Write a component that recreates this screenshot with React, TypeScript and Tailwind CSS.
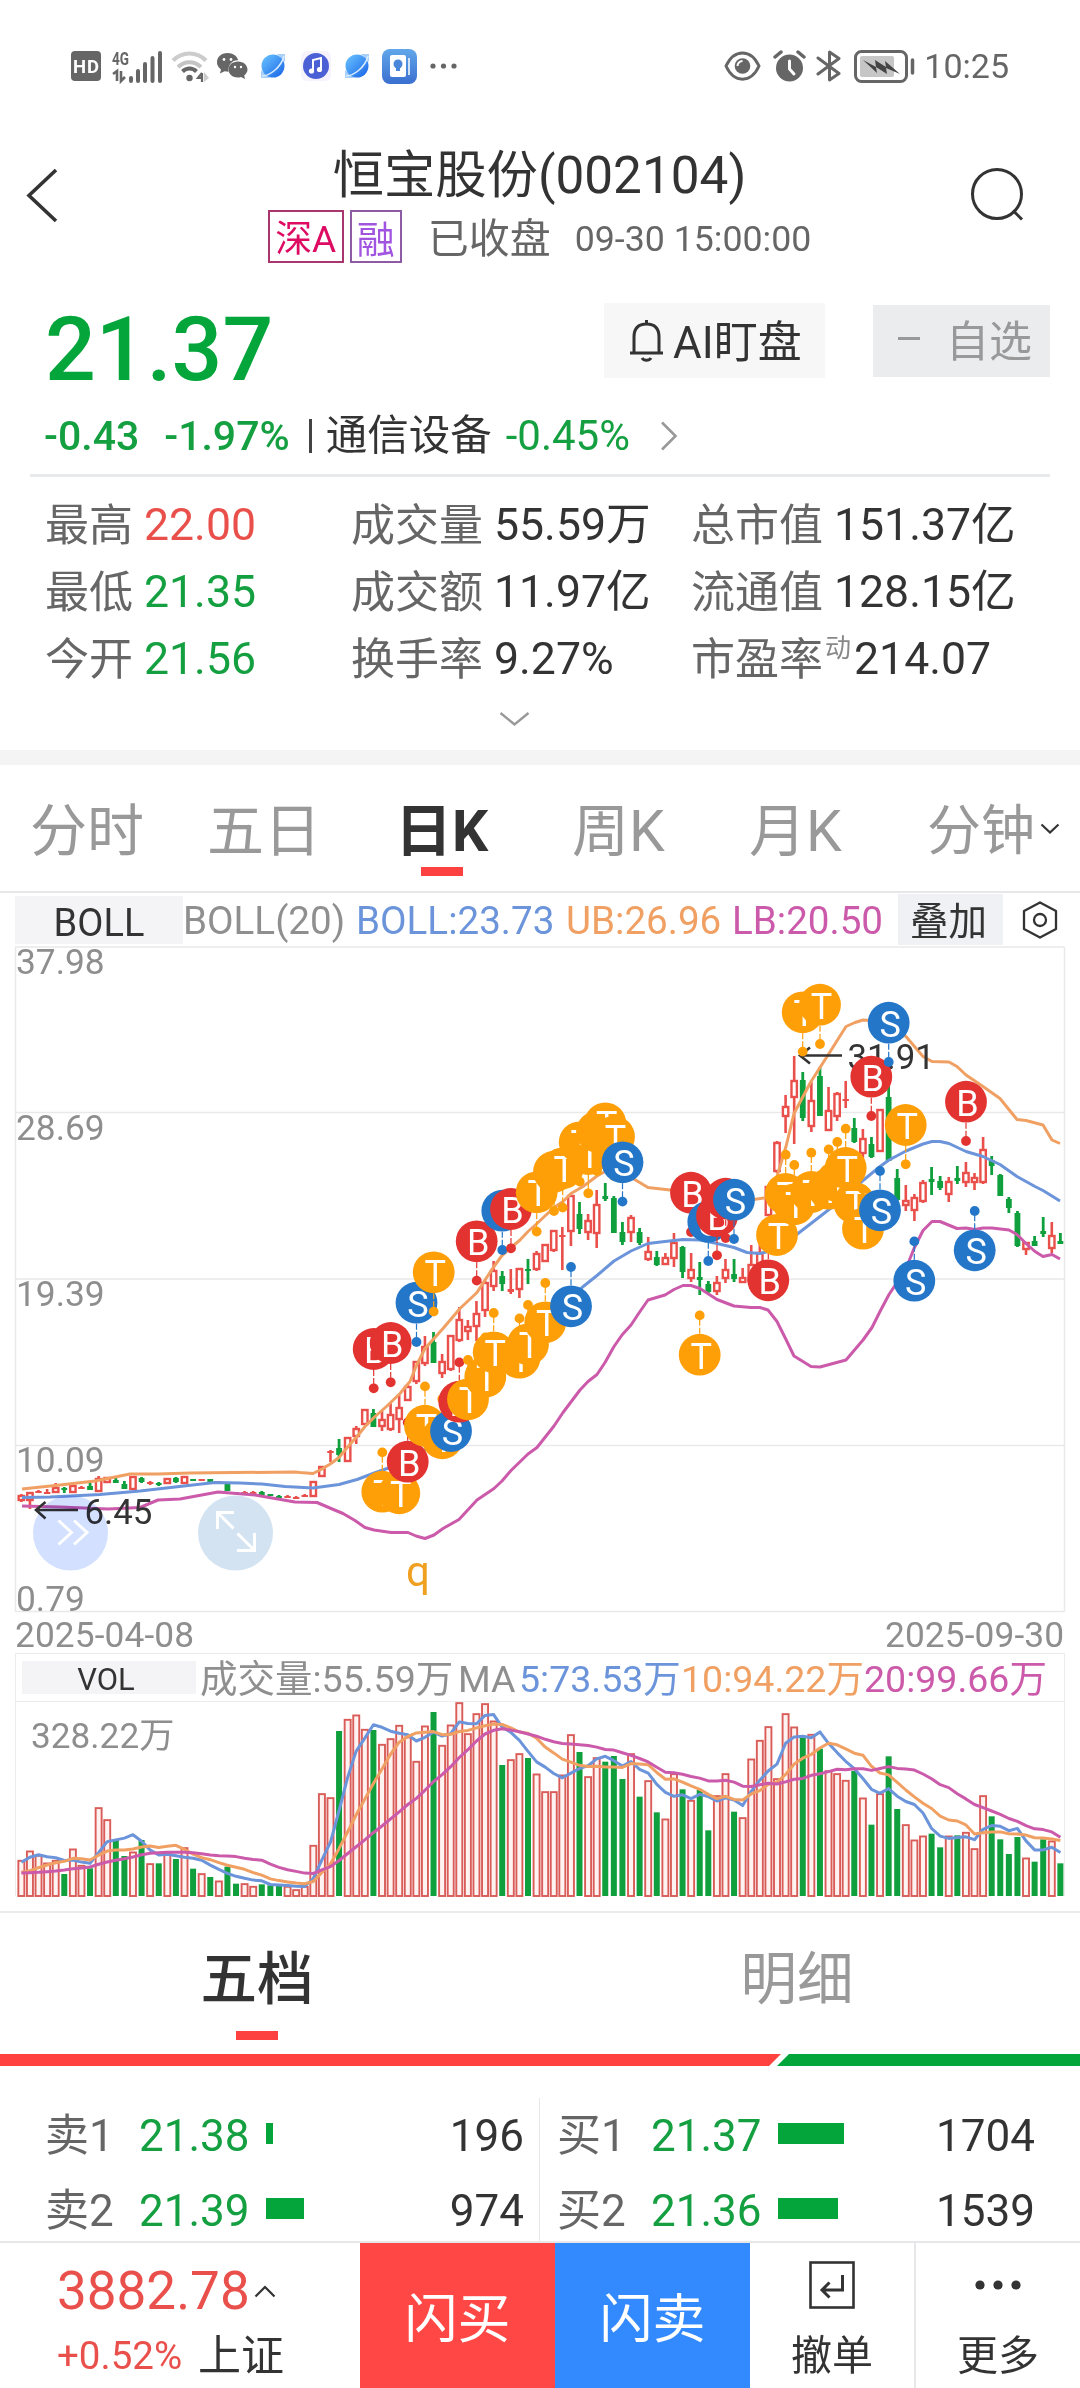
import React from 'react';

// bar geometry shared by both charts
const FIRST_X = 21.35;
const STEP = 8.587;
const barX = (index: number) => FIRST_X + index * STEP;

const RED = '#ea504b';
const GREEN = '#0f9f3c';

// [direction, high, body top, body bottom, low] in chart pixels
type Candle = ['r' | 'g', number, number, number, number];

const candles: Candle[] = [
  ['r', 1494, 1496, 1500, 1502], ['r', 1492, 1493, 1500, 1509], ['r', 1490, 1491, 1493, 1493], ['r', 1489, 1492, 1494, 1494],
  ['r', 1483, 1488, 1492, 1493], ['g', 1487, 1488, 1490, 1493], ['r', 1485, 1486, 1492, 1493], ['r', 1486, 1487, 1489, 1489],
  ['g', 1483, 1486, 1490, 1490], ['r', 1476, 1479, 1491, 1492], ['r', 1477, 1478, 1482, 1483], ['g', 1476, 1480, 1483, 1483],
  ['g', 1481, 1484, 1489, 1489], ['r', 1476, 1477, 1489, 1489], ['g', 1477, 1478, 1482, 1483], ['r', 1481, 1482, 1484, 1485],
  ['g', 1482, 1483, 1485, 1486], ['r', 1478, 1479, 1483, 1483], ['g', 1477, 1478, 1482, 1483], ['r', 1476, 1477, 1483, 1483],
  ['g', 1479, 1479, 1481, 1481], ['r', 1479, 1479, 1481, 1481], ['g', 1479, 1479, 1482, 1482], ['r', 1481, 1481, 1483, 1483],
  ['g', 1484, 1484, 1491, 1491], ['g', 1492, 1492, 1494, 1494], ['r', 1491, 1492, 1493, 1493], ['r', 1491, 1492, 1493, 1493],
  ['g', 1491, 1492, 1495, 1495], ['g', 1494, 1494, 1496, 1496], ['g', 1495, 1496, 1498, 1498], ['r', 1495, 1496, 1497, 1498],
  ['r', 1496, 1497, 1498, 1498], ['r', 1494, 1495, 1497, 1497], ['r', 1481, 1482, 1496, 1497], ['r', 1466, 1467, 1476, 1477],
  ['r', 1450, 1451, 1452, 1462], ['g', 1439, 1448, 1455, 1462], ['r', 1437, 1438, 1461, 1462], ['r', 1426, 1429, 1436, 1444],
  ['r', 1409, 1410, 1424, 1425], ['g', 1409, 1413, 1427, 1427], ['r', 1411, 1420, 1426, 1431], ['r', 1403, 1415, 1429, 1431],
  ['r', 1395, 1408, 1419, 1433], ['r', 1385, 1387, 1400, 1401], ['r', 1361, 1362, 1381, 1384], ['r', 1336, 1347, 1363, 1366],
  ['g', 1332, 1342, 1363, 1363], ['r', 1354, 1362, 1373, 1378], ['r', 1335, 1336, 1369, 1371], ['r', 1307, 1320, 1340, 1342],
  ['r', 1320, 1327, 1331, 1340], ['r', 1301, 1314, 1326, 1341], ['r', 1280, 1283, 1310, 1317], ['r', 1261, 1271, 1286, 1291],
  ['g', 1271, 1276, 1284, 1291], ['r', 1269, 1289, 1292, 1294], ['r', 1268, 1269, 1289, 1298], ['g', 1259, 1269, 1271, 1284],
  ['r', 1251, 1254, 1269, 1271], ['r', 1244, 1245, 1261, 1262], ['r', 1230, 1231, 1250, 1252], ['r', 1227, 1235, 1237, 1270],
  ['r', 1195, 1196, 1231, 1246], ['g', 1202, 1214, 1229, 1234], ['r', 1214, 1221, 1232, 1240], ['r', 1190, 1205, 1233, 1248],
  ['g', 1183, 1196, 1199, 1201], ['g', 1196, 1198, 1233, 1233], ['g', 1222, 1232, 1242, 1245], ['r', 1215, 1218, 1232, 1242],
  ['g', 1228, 1232, 1243, 1245], ['r', 1237, 1252, 1259, 1261], ['g', 1251, 1257, 1265, 1266], ['r', 1253, 1258, 1264, 1265],
  ['r', 1233, 1243, 1258, 1267], ['g', 1246, 1247, 1272, 1278], ['r', 1253, 1270, 1278, 1282], ['g', 1262, 1277, 1280, 1295],
  ['g', 1281, 1284, 1292, 1293], ['r', 1276, 1283, 1291, 1295], ['r', 1259, 1270, 1278, 1283], ['g', 1259, 1274, 1279, 1282],
  ['r', 1268, 1278, 1282, 1283], ['r', 1245, 1265, 1281, 1283], ['r', 1225, 1253, 1265, 1275], ['r', 1185, 1187, 1215, 1216],
  ['r', 1141, 1143, 1171, 1173], ['r', 1095, 1107, 1116, 1133], ['r', 1056, 1081, 1097, 1144], ['g', 1072, 1080, 1118, 1121],
  ['r', 1082, 1101, 1126, 1132], ['g', 1067, 1076, 1116, 1116], ['r', 1087, 1111, 1130, 1131], ['r', 1092, 1094, 1116, 1121],
  ['r', 1081, 1099, 1101, 1108], ['g', 1118, 1128, 1142, 1143], ['r', 1129, 1139, 1153, 1160], ['g', 1137, 1144, 1157, 1158],
  ['r', 1109, 1110, 1151, 1152], ['g', 1083, 1097, 1161, 1161], ['g', 1169, 1178, 1200, 1201], ['r', 1185, 1201, 1205, 1211],
  ['r', 1194, 1198, 1210, 1221], ['r', 1180, 1183, 1201, 1203], ['g', 1167, 1179, 1182, 1195], ['g', 1176, 1181, 1188, 1190],
  ['r', 1177, 1182, 1194, 1202], ['g', 1166, 1178, 1181, 1184], ['r', 1162, 1173, 1182, 1187], ['r', 1173, 1178, 1182, 1190],
  ['r', 1137, 1150, 1182, 1184], ['g', 1156, 1160, 1166, 1175], ['g', 1174, 1175, 1196, 1196], ['g', 1197, 1199, 1208, 1213],
  ['g', 1211, 1213, 1246, 1247], ['r', 1242, 1243, 1249, 1255], ['g', 1236, 1241, 1246, 1246], ['g', 1217, 1231, 1234, 1237],
  ['r', 1222, 1236, 1248, 1253], ['g', 1233, 1241, 1244, 1244],
];

// volume bar tops, measured down from the header in thirds of a pixel
const VOLUME_BASE = 768;
const volumeTops = [
  660, 632, 645, 668, 660, 702, 626, 675, 685, 502, 538, 598, 648, 635, 600, 670, 670, 640, 657, 622,
  686, 700, 711, 722, 680, 731, 730, 738, 733, 736, 738, 738, 748, 738, 615, 460, 472, 273, 237, 224,
  267, 270, 312, 295, 255, 290, 363, 257, 216, 315, 254, 187, 280, 220, 190, 242, 375, 358, 340, 354,
  401, 454, 454, 404, 283, 336, 409, 352, 365, 348, 417, 340, 470, 421, 517, 536, 400, 448, 480, 450,
  571, 466, 400, 515, 532, 356, 300, 259, 415, 220, 260, 290, 282, 326, 391, 400, 420, 393, 473, 554,
  460, 349, 507, 553, 599, 587, 581, 622, 587, 586, 576, 625, 466, 529, 598, 642, 591, 653, 665, 598,
  602, 670,
];

const volumeY = (v: number) => 1640 + v / 3;

// averages before the first full window come from the previous sessions
const seed5 = [667, 652, 644, 650];
const seed10 = [697, 692, 683, 675, 668, 664, 655, 656, 660];
const seed20 = [699, 698, 697, 695, 693, 690, 686, 684, 681, 673, 666, 661, 656, 651, 644, 640, 638, 637, 637];

const averageLine = (period: number, seed: number[]) =>
  volumeTops
    .map((_, i) => {
      const value =
        i < period - 1
          ? seed[i]
          : volumeTops.slice(i - period + 1, i + 1).reduce((a, b) => a + b, 0) / period;
      return `${barX(i).toFixed(1)},${volumeY(value).toFixed(1)}`;
    })
    .join(' ');

const upperBand =
  '22,1489 60,1485 95,1481 130,1474 158,1474 190,1473 295,1472 300,1472.5 313,1473.5 322,1469 331,1463.5 339,1457.5 348,1446.5 357,1436.5 365,1426.5 374,1417.5 387,1406 400,1393.5 410,1381.5 416,1366.5 425,1348.5 434,1338.5 443,1328.5 460,1308.5 477,1292.5 485,1280 494,1266.5 502,1255.5 520,1240 528,1231.5 537,1223.5 554,1207.5 563,1201.5 571,1193.5 583,1186.5 597,1176 605,1171.5 622,1167 633,1178.5 648,1187.5 670,1190 700,1193.5 727,1198.5 750,1200 768,1197.5 777,1176.5 786,1146.5 794,1113.5 811,1081.5 829,1053.5 846,1026.5 855,1022.5 863,1020 870,1020.5 889,1025 906,1036.5 923,1056.5 932,1061.5 949,1062 957,1066.5 966,1075 983,1086.5 1000,1098.5 1017,1119.5 1026,1120.5 1043,1125 1052,1140 1060,1143.5';

const middleBand =
  '22,1497.5 50,1497 100,1494.5 140,1491 175,1487 215,1482.5 240,1483 262,1484 285,1486.5 313,1488 339,1484.5 357,1479.5 373,1473.5 387,1468.5 408,1460 433,1445 460,1421.5 487,1391.5 513,1356.5 547,1320 582,1287.5 597,1275.5 614,1261 631,1251 648,1243.5 665,1241.5 683,1239.5 700,1240 717,1243.5 734,1247.5 747,1252.5 760,1253.5 777,1249.5 798,1233.5 811,1223.5 829,1209.5 846,1197.5 863,1180.5 880,1166.5 889,1160 906,1151 923,1144 932,1141.5 940,1141.5 949,1143.5 966,1151.5 983,1156.5 1000,1164.5 1017,1176.5 1035,1186.5 1043,1190.5 1060,1201';

const lowerBand =
  '22,1506 60,1507 108,1509 140,1507.5 158,1500 180,1499 218,1492 255,1495 295,1502 317,1502.5 331,1508.5 343,1513.5 355,1520.5 365,1527.5 374,1530 391,1532.5 408,1532.5 416,1536 425,1538.5 434,1535 443,1528.5 459,1519.5 477,1500 494,1488.5 502,1481 511,1470.5 528,1454 537,1447.5 554,1426 563,1412.5 580,1390 588,1381.5 597,1374.5 605,1362.5 614,1346.5 622,1335 631,1325 640,1311.5 648,1300 665,1295 674,1289.5 683,1285.5 691,1285.5 700,1288.5 717,1299.5 734,1306 751,1307.5 760,1307.5 768,1310 777,1321.5 786,1339.5 794,1356 811,1366.5 820,1367 846,1360 863,1340 872,1327.5 880,1311.5 889,1294.5 897,1282.5 906,1268.5 914,1248.5 923,1230.5 932,1221.5 940,1221.5 957,1228.5 966,1228 975,1229.5 983,1228 992,1228 1009,1230 1017,1234.5 1026,1243.5 1035,1251.5 1043,1256.5 1052,1254.5 1060,1259';

const markerColors = { B: '#e23330', S: '#2476c8', T: '#ff9f08' };

// [kind, x, circle y, side the dot is on]
type Marker = ['B' | 'S' | 'T', number, number, 1 | -1];

const markers: Marker[] = [
  ['B', 373.7, 1349, 1], ['T', 382.3, 1491.7, -1], ['B', 390.7, 1343, 1], ['T', 399.3, 1493.3, -1],
  ['B', 407.7, 1461.7, -1], ['S', 416.5, 1302.7, 1], ['T', 425, 1425.7, -1], ['T', 433.7, 1272.3, 1],
  ['T', 442.3, 1438.3, -1], ['S', 451, 1431, -1], ['B', 459.3, 1401.7, -1], ['T', 468, 1399.3, -1],
  ['B', 476.7, 1241.3, 1], ['T', 485.3, 1376.7, -1], ['T', 493.7, 1352.3, -1], ['S', 502.3, 1210.7, 1],
  ['B', 511, 1209, 1], ['T', 519.5, 1357.7, -1], ['T', 528, 1344.3, -1], ['T', 536.7, 1192.3, 1],
  ['T', 545.3, 1322.3, -1], ['T', 554, 1171.7, 1], ['T', 562.7, 1168.3, 1], ['S', 571, 1306.3, -1],
  ['T', 579.7, 1142.3, 1], ['T', 588.3, 1154, 1], ['T', 597, 1131.7, 1], ['T', 605.3, 1123.3, 1],
  ['T', 614, 1136.7, 1], ['S', 622.5, 1162.3, 1], ['B', 691, 1192.7, 1], ['T', 699.7, 1354.7, -1],
  ['S', 708.3, 1221.7, 1], ['B', 717, 1216, 1], ['B', 725.7, 1198.7, 1], ['S', 734, 1199.7, 1],
  ['B', 768.3, 1280.3, -1], ['T', 777, 1235, -1], ['T', 785.7, 1194, -1], ['T', 794.3, 1204.3, -1],
  ['T', 802.7, 1012.3, 1], ['T', 811.3, 1192, -1], ['T', 820, 1004.7, 1], ['T', 828.7, 1188.7, -1],
  ['T', 837.3, 1181.3, -1], ['T', 845.7, 1168, -1], ['T', 854.3, 1203, -1], ['T', 863, 1228.7, -1],
  ['B', 871.3, 1076.7, 1], ['S', 880, 1210.3, -1], ['S', 888.7, 1022.7, 1], ['T', 905.7, 1125, 1],
  ['S', 914.3, 1280.7, -1], ['B', 966, 1101.7, 1], ['S', 974.7, 1250.3, -1],
];

const axisLabels = [
  { text: '37.98', y: 974 },
  { text: '28.69', y: 1140 },
  { text: '19.39', y: 1306 },
  { text: '10.09', y: 1472 },
  { text: '0.79', y: 1610.5 },
];

const stats = [
  [
    { label: '最高', value: '22.00', color: 'text-[#ea504b]' },
    { label: '成交量', value: '55.59万', color: 'text-[#333]' },
    { label: '总市值', value: '151.37亿', color: 'text-[#333]' },
  ],
  [
    { label: '最低', value: '21.35', color: 'text-[#149f40]' },
    { label: '成交额', value: '11.97亿', color: 'text-[#333]' },
    { label: '流通值', value: '128.15亿', color: 'text-[#333]' },
  ],
  [
    { label: '今开', value: '21.56', color: 'text-[#149f40]' },
    { label: '换手率', value: '9.27%', color: 'text-[#333]' },
    { label: '市盈率', sup: '动', value: '214.07', color: 'text-[#333]' },
  ],
];

const orders = [
  { side: '卖1', price: '21.38', bar: 7, amount: '196' },
  { side: '买1', price: '21.37', bar: 66, amount: '1704' },
  { side: '卖2', price: '21.39', bar: 38, amount: '974' },
  { side: '买2', price: '21.36', bar: 60, amount: '1539' },
];

const BrowserIcon = () => (
  <svg width="26" height="26" viewBox="0 0 26 26">
    <defs>
      <linearGradient id="globe" x1="0" y1="0" x2="1" y2="1">
        <stop offset="0" stopColor="#6cc6ff" />
        <stop offset="1" stopColor="#1763e8" />
      </linearGradient>
    </defs>
    <path d="M17 1h8v8z M1 17v8h9z" fill="#a9d0fb" />
    <circle cx="13" cy="13" r="11.5" fill="url(#globe)" />
    <path d="M2 23C9 23 21 15 24 3" fill="none" stroke="#d8ecff" strokeWidth="1.6" />
  </svg>
);

const StatusBar = () => (
  <div className="flex h-[132px] items-center justify-between pl-[71px] pr-[71px] text-[#666]">
    <div className="flex items-center">
      <svg width="30" height="30" viewBox="0 0 30 30">
        <rect width="30" height="30" rx="4" fill="#666" />
        <text x="2" y="22" fontSize="18.5" fontWeight="700" fill="#fff" textLength="26" fontFamily="Roboto, sans-serif">HD</text>
      </svg>
      <svg className="ml-2.5 overflow-visible" width="52" height="34" viewBox="0 0 52 34">
        <text x="1" y="15.500" fontSize="19" fontWeight="700" fill="#666" textLength="17" lengthAdjust="spacingAndGlyphs" fontFamily="Roboto, sans-serif">4G</text>
        <path d="M2 25l4-3v10M10 22v10l4-4" fill="none" stroke="#666" strokeWidth="2.6" />
        <path d="M20 29v3M27 22v10M34 15v17M41.500 9v23M49 4v28" stroke="#666" strokeWidth="4" strokeLinecap="round" />
      </svg>
      <svg className="ml-2" width="38" height="34" viewBox="0 0 38 34">
        <g fill="none" strokeWidth="4">
          <path d="M2 11.500C11 2 26 2 35 11.500" stroke="#ccc" />
          <path d="M7 18C14 11.500 23 11.500 30 18" stroke="#c4c4c4" />
          <path d="M11.500 22.500c4-4 10-4 14 0" stroke="#666" />
        </g>
        <circle cx="18.500" cy="29" r="3.200" fill="#666" />
        <path d="M31 24v9M31 24l-4 5h4" fill="none" stroke="#666" strokeWidth="2.200" />
        <path d="M33 23l5 6-5 4z" fill="#ccc" />
      </svg>
      <svg className="ml-[7px]" width="32" height="28" viewBox="0 0 32 28">
        <path d="M11.500 1C5.200 1 1 5 1 10.200c0 3 1.600 5.500 4 7.200l-1 4 4.500-2.200 4 .5c-1-7 4-12 9.700-11.500C21 4 17 1 11.500 1z" fill="#666" />
        <path d="M22 9.500c-5.500 0-9.500 3.600-9.500 8 0 4.600 4 8 9.500 8 1 0 2-.1 3-.5l4 2-.8-3.500c1.900-1.500 3.300-3.600 3.300-6 0-4.400-4.200-8-9.500-8z" fill="#666" />
        <g fill="#fff">
          <circle cx="8" cy="7.500" r="1.400" />
          <circle cx="15" cy="7.500" r="1.400" />
          <circle cx="19" cy="15" r="1.200" />
          <circle cx="25" cy="15" r="1.200" />
        </g>
      </svg>
      <span className="ml-[12px]"><BrowserIcon /></span>
      <svg className="ml-[15px]" width="30" height="30" viewBox="0 0 30 30">
        <rect width="30" height="30" rx="6" fill="#f6f3fc" />
        <circle cx="15" cy="15" r="13" fill="#4c60d6" />
        <path d="M12 20V9l8-2v11.500" fill="none" stroke="#fff" strokeWidth="2" />
        <circle cx="10.500" cy="20" r="2.600" fill="#fff" />
        <circle cx="18.500" cy="18.500" r="2.600" fill="#fff" />
      </svg>
      <span className="ml-[13px]"><BrowserIcon /></span>
      <svg className="ml-3" width="35" height="35" viewBox="0 0 35 35">
        <defs>
          <linearGradient id="tips" x1="0" y1="0" x2="0" y2="1">
            <stop offset="0" stopColor="#61a7ea" />
            <stop offset="1" stopColor="#3a6fd0" />
          </linearGradient>
        </defs>
        <rect width="35" height="35" rx="8" fill="url(#tips)" />
        <rect x="8" y="6" width="16" height="22" rx="2" fill="#fff" />
        <path d="M27 9v17" stroke="#cfe2fa" strokeWidth="2" />
        <circle cx="16" cy="15" r="4.500" fill="#4a86da" />
        <path d="M14 19h4v3h-4z" fill="#4a86da" />
      </svg>
      <svg className="ml-[13px]" width="27" height="6" viewBox="0 0 27 6" fill="#666">
        <circle cx="3" cy="3" r="2.600" />
        <circle cx="13.500" cy="3" r="2.600" />
        <circle cx="24" cy="3" r="2.600" />
      </svg>
    </div>
    <div className="flex items-center">
      <svg width="37" height="30" viewBox="0 0 37 30">
        <path d="M2 15C10-2.500 27-2.500 35 15 27 32.500 10 32.500 2 15z" fill="none" stroke="#666" strokeWidth="3" />
        <circle cx="18.500" cy="15" r="7.800" fill="#666" />
        <path d="M13.500 15a5 5 0 0 1 5-5" fill="none" stroke="#fff" strokeWidth="2" />
      </svg>
      <svg className="ml-3" width="33" height="32" viewBox="0 0 33 32">
        <circle cx="16.500" cy="18" r="13.500" fill="#666" />
        <path d="M2 7l6-5M31 7l-6-5" stroke="#666" strokeWidth="3.500" strokeLinecap="round" />
        <path d="M16.500 11v8l4.500 5" fill="none" stroke="#fff" strokeWidth="3" strokeLinecap="round" />
      </svg>
      <svg className="ml-[10px]" width="26" height="34" viewBox="0 0 26 34">
        <path d="M2 9l21 15.500L13.500 31V3L23 9.500 2 25" fill="none" stroke="#666" strokeWidth="3" strokeLinejoin="round" strokeLinecap="round" />
      </svg>
      <svg className="ml-3" width="62" height="33" viewBox="0 0 62 33">
        <rect x="1.500" y="1.500" width="51" height="30" rx="6" fill="none" stroke="#666" strokeWidth="3" />
        <rect x="6" y="6" width="34" height="21" rx="2" fill="#c6c6c6" />
        <path d="M9 10l13 7-1-7 11 7-1-6 15 13-14-6 1 6-11-7 1 6z" fill="#444" />
        <path d="M58.500 10v13" stroke="#666" strokeWidth="3.500" strokeLinecap="round" />
      </svg>
      <span className="ml-2 text-[34px] leading-none">10:25</span>
    </div>
  </div>
);

const Header = () => (
  <header className="flex h-[147px] justify-between pl-[25px] pr-[54px]">
    <svg className="mt-9" width="34" height="56" viewBox="0 0 34 56">
      <path d="M31 2L4 27.500 31 53" fill="none" stroke="#333" strokeWidth="3.600" />
    </svg>
    <div className="ml-[50px] flex flex-col items-center pt-[17px]">
      <h1 className="whitespace-nowrap text-[51.3px] leading-[54px] text-[#333]">恒宝股份(002104)</h1>
      <div className="mt-[7px] flex items-center whitespace-nowrap leading-none text-[#666]">
        <span className="flex h-[53px] w-[76px] items-center justify-center border-2 border-[#a9366f] pt-1.5 text-[37px] text-[#dd0b62]">深A</span>
        <span className="ml-1.5 flex h-[53px] w-[52px] items-center justify-center border-2 border-[#8d5aa3] pt-1.5 text-[38px] text-[#a154e0]">融</span>
        <span className="ml-[26px] pt-1.5 text-[41px]">已收盘</span>
        <span className="ml-6 pt-1.5 text-[35.7px]">09-30 15:00:00</span>
      </div>
    </div>
    <svg className="mt-[34px]" width="56" height="56" viewBox="0 0 56 56">
      <circle cx="27" cy="28" r="24.500" fill="none" stroke="#333" strokeWidth="3" />
      <path d="M43 44.500l9 9" stroke="#333" strokeWidth="3" />
    </svg>
  </header>
);

const Quote = () => (
  <section className="h-[471px]">
    <div className="flex h-[124px] items-start justify-between pl-[45px] pr-[30px] pt-6">
      <span className="text-[89.5px] font-medium leading-[94px] text-[#04a53b]">21.37</span>
      <div className="flex items-center">
        <button className="flex h-[75px] w-[221px] items-center bg-[#f7f7f7] pl-[25px] text-[44px] leading-none text-[#333]">
          <svg width="35" height="42" viewBox="0 0 35 42">
            <path d="M1 33h33M5 33V17C5 8 10 4 17.500 4S30 8 30 17v16M17.500 4V0M13 38c2 3 7 3 9 0" fill="none" stroke="#333" strokeWidth="3" />
          </svg>
          <span className="ml-[9px] whitespace-nowrap pt-1">AI盯盘</span>
        </button>
        <button className="ml-12 flex h-[72px] w-[177px] items-center bg-[#ebecee] pl-[25px] text-[43px] leading-none text-[#999]">
          <span className="mb-1 h-[3px] w-[22px] bg-[#999]" />
          <span className="ml-[26px] pt-1">自选</span>
        </button>
      </div>
    </div>
    <div className="mt-[10px] flex h-[46px] items-center whitespace-nowrap pl-[44px] text-[41px] leading-none text-[#149f40]">
      <span className="font-medium">-0.43</span>
      <span className="ml-[25px] font-medium">-1.97%</span>
      <span className="ml-[19px] h-[34px] w-[3px] bg-[#444]" />
      <span className="ml-[14px] text-[41.5px] text-[#333]">通信设备</span>
      <span className="ml-[14px] text-[42px]">-0.45%</span>
      <svg className="ml-[30px]" width="18" height="30" viewBox="0 0 18 30">
        <path d="M2 1.500L15.500 15 2 28.500" fill="none" stroke="#999" strokeWidth="2.600" />
      </svg>
    </div>
    <div className="mx-[30px] mt-[15px] h-[3px] bg-[#e8e9eb]" />
    <div className="mt-[15px]">
      {stats.map((row) => (
        <div key={row[0].label} className="grid h-[67px] grid-cols-[306px_340px_1fr] items-center whitespace-nowrap pl-[45px] text-[44px] leading-none">
          {row.map((item) => (
            <div key={item.label} className="flex items-center">
              <span className="text-[#666]">{item.label}</span>
              {item.sup && <span className="-mr-[8px] mb-6 ml-[2px] text-[26px] text-[#888]">{item.sup}</span>}
              <span className={`ml-[11px] text-[44.6px] ${item.color}`}>{item.value}</span>
            </div>
          ))}
        </div>
      ))}
    </div>
    <svg className="ml-[499px] mt-[18px]" width="31" height="16" viewBox="0 0 31 16">
      <path d="M1.500 2l14 11.500L29.500 2" fill="none" stroke="#999" strokeWidth="2.400" />
    </svg>
  </section>
);

const Periods = () => (
  <nav className="flex h-[128px] items-start whitespace-nowrap border-b-2 border-[#e7e7e9] pl-[30px] pt-[39px] text-[57px] leading-[56px] text-[#999]">
    <span className="w-[177px]">分时</span>
    <span className="w-[188px]">五日</span>
    <span className="flex w-[177px] flex-col font-bold text-[#333]">
      日K
      <span className="ml-[26px] mt-[7px] h-[9px] w-[42px] bg-[#fd4141]" />
    </span>
    <span className="w-[177px]">周K</span>
    <span className="w-[178px]">月K</span>
    <span className="text-[54px]">分钟</span>
    <svg className="ml-[5px] mt-[19px]" width="20" height="12" viewBox="0 0 20 12">
      <path d="M1.500 1.500L10 9.500l8.500-8" fill="none" stroke="#333" strokeWidth="2.200" />
    </svg>
  </nav>
);

const IndicatorBar = () => (
  <div className="flex h-[53px] items-center whitespace-nowrap pl-[15px] text-[38.6px] leading-none">
    <span className="flex h-12 w-[168px] items-center justify-center bg-[#f4f4f6] pt-1.5 text-[38px] text-[#333]">BOLL</span>
    <span className="w-[173px] pt-[3px] text-[#8f8f8f]">BOLL(20)</span>
    <span className="w-[210px] pt-[3px] text-[#6b94da]">BOLL:23.73</span>
    <span className="w-[166px] pt-[3px] text-[#f0a063]">UB:26.96</span>
    <span className="w-[166px] pt-[3px] text-[#cc5aaa]">LB:20.50</span>
    <span className="flex h-[51px] w-[105px] items-center justify-center bg-[#f0f1f4] pr-1 pt-1.5 text-[#333]">叠加</span>
    <svg className="ml-[19px]" width="36" height="38" viewBox="0 0 36 38">
      <path d="M18 1.500L34 10v18L18 36.500 2 28V10z" fill="none" stroke="#333" strokeWidth="2.300" strokeLinejoin="round" />
      <circle cx="18" cy="19" r="6" fill="none" stroke="#333" strokeWidth="2.300" />
    </svg>
  </div>
);

const CandleShape = ({ index, candle }: { index: number; candle: Candle }) => {
  const [direction, high, top, bottom, low] = candle;
  const x = barX(index);
  const body = bottom - top;
  if (direction === 'g') {
    return (
      <g fill={GREEN}>
        <rect x={x - 1.4} y={high} width={2.8} height={low - high} />
        <rect x={x - 2.9} y={top} width={5.8} height={body} />
      </g>
    );
  }
  return (
    <g fill={RED}>
      <rect x={x - 1.3} y={high} width={2.6} height={low - high} />
      {body > 3 ? (
        <rect x={x - 2.7} y={top} width={5.4} height={body} fill="#fff" stroke={RED} strokeWidth={2.4} />
      ) : (
        <rect x={x - 3.2} y={top} width={6.4} height={Math.max(body, 2)} />
      )}
    </g>
  );
};

const MarkerShape = ({ marker }: { marker: Marker }) => {
  const [kind, x, y, side] = marker;
  const color = markerColors[kind];
  return (
    <g>
      <line x1={x} y1={y + side * 21} x2={x} y2={y + side * 39} stroke={color} strokeWidth={1.2} strokeDasharray="6 2" />
      <circle cx={x} cy={y + side * 39.3} r={4.9} fill={color} />
      <circle cx={x} cy={y} r={20.9} fill={color} />
      <text x={x + 1.5} y={y + 14} textAnchor="middle" fontSize={36} fill="#fff">{kind}</text>
    </g>
  );
};

const KLineChart = () => (
  <svg className="block" width="1080" height="707" viewBox="0 946 1080 707" fontFamily="Roboto, sans-serif">
    <g stroke="#e9e9ea" strokeWidth="1.5" fill="none">
      <path d="M15 947H1064.500M15 1112.500H1064M15 1279H1064M15 1445.500H1064M15 1611.500H1064.500M15.500 947V1611.500M1064.500 947V1611.500" />
    </g>
    <g fontSize="35.3" fill="#8e8e8e">
      {axisLabels.map((label) => (
        <text key={label.text} x="16" y={label.y}>{label.text}</text>
      ))}
      <text x="15" y="1647" textLength="179">2025-04-08</text>
      <text x="885" y="1647" textLength="179">2025-09-30</text>
    </g>
    {candles.map((candle, index) => (
      <CandleShape key={index} index={index} candle={candle} />
    ))}
    <g fill="none" strokeWidth="3" strokeLinejoin="round">
      <polyline points={middleBand} stroke="#6b94da" />
      <polyline points={upperBand} stroke="#f0a063" />
      <polyline points={lowerBand} stroke="#cc5aaa" />
    </g>
    <g fill="none" stroke="#333" strokeWidth="2.600">
      <path d="M78 1510H36M45.500 1502L36 1510l9.500 8.500" />
      <path d="M842 1055.500H800M810 1047.500l-10 8 10 8" />
    </g>
    <g fontSize="34.8" fill="#333">
      <text x="84.500" y="1523.500">6.45</text>
      <text x="847.500" y="1068.500">31.91</text>
    </g>
    {markers.map((marker, index) => (
      <MarkerShape key={index} marker={marker} />
    ))}
    <text x="406" y="1586" fontSize="42" fill="#f0a020">q</text>
    <g fill="none" stroke="#fff" strokeWidth="3">
      <circle cx="70.500" cy="1533" r="37.500" fill="#d3e0ff" stroke="none" className="mix-blend-multiply" />
      <path d="M58.500 1520.500l13 12-13 12M74 1520.500l13 12-13 12" />
      <circle cx="235.500" cy="1533" r="37.500" fill="#d3e3f2" stroke="none" className="mix-blend-multiply" />
      <path d="M234 1512.500H217.500V1529M217.500 1512.500l16 16M237 1550.500h17.500V1533M254.500 1550.500l-17-17" />
    </g>
  </svg>
);

const VolumeChart = () => (
  <div className="h-[260px] border-b-2 border-[#ececee]">
    <div className="mx-[15px] flex h-[49px] items-center whitespace-nowrap border-[1.5px] border-[#ececee] pl-[6px] text-[37.5px] leading-none">
      <span className="flex h-[33px] w-[174px] items-center justify-center bg-[#f4f4f6] pr-1.5 pt-1 text-[31px] text-[#333]">VOL</span>
      <span className="ml-1 w-[258px] pt-[5px] text-[#8f8f8f]">成交量:55.59万</span>
      <span className="w-[61px] pt-[5px] text-[#8f8f8f]">MA</span>
      <span className="w-[162px] pt-[5px] text-[#6b94da]">5:73.53万</span>
      <span className="w-[183px] pt-[5px] text-[#f0a063]">10:94.22万</span>
      <span className="pt-[5px] text-[#cc5aaa]">20:99.66万</span>
    </div>
    <svg className="block" width="1080" height="208" viewBox="0 1702 1080 208" fontFamily="Roboto, 'Noto Sans CJK SC', sans-serif">
      <path d="M15.500 1702V1896M1064.500 1702V1896" stroke="#ececee" />
      <text x="31" y="1748" fontSize="35.2" fill="#8e8e8e">328.22万</text>
      {volumeTops.map((top, index) => {
        const x = barX(index);
        const y = volumeY(top);
        const height = volumeY(VOLUME_BASE) - y;
        return candles[index][0] === 'g' ? (
          <rect key={index} x={x - 3} y={y} width={6} height={height} fill={GREEN} />
        ) : (
          <rect key={index} x={x - 3} y={y + 0.8} width={6} height={height - 0.8} fill="#fff3f2" stroke="#d95c58" strokeWidth={1.9} />
        );
      })}
      <g fill="none" strokeWidth="3" strokeLinejoin="round">
        <polyline points={averageLine(5, seed5)} stroke="#6b94da" />
        <polyline points={averageLine(10, seed10)} stroke="#f0a063" />
        <polyline points={averageLine(20, seed20)} stroke="#cc5aaa" />
      </g>
    </svg>
  </div>
);

const OrderBook = () => (
  <section className="h-[328px] overflow-hidden">
    <div className="grid h-[141px] grid-cols-[514px_1fr] pt-[39px] text-center text-[56.5px] leading-[56px] text-[#999]">
      <div className="flex flex-col items-center font-medium text-[#333]">
        五档
        <span className="mt-[23px] h-[9px] w-[42px] bg-[#fd4141]" />
      </div>
      <span>明细</span>
    </div>
    <svg className="block" width="1080" height="12" viewBox="0 0 1080 12">
      <path d="M0 0H781L769 12H0z" fill="#ff4240" />
      <path d="M789 0H1080V12H777z" fill="#04a53b" />
    </svg>
    <div className="mt-[32px] grid grid-cols-[540px_540px]">
      {orders.map((order, index) => (
        <div
          key={order.side}
          className={`flex h-[75px] items-center whitespace-nowrap text-[44px] leading-none ${
            index % 2 === 0 ? 'border-r border-[#e7e7e9] pl-[45px] pr-[15px]' : 'pl-[17px] pr-[45px]'
          }`}
        >
          <span className="w-[94px] text-[#666]">{order.side}</span>
          <span className="w-[127px] text-[#149f40]">{order.price}</span>
          <span className="mb-1 h-[21px] bg-[#04a53b]" style={{ width: order.bar }} />
          <span className="ml-auto text-[#333]">{order.amount}</span>
        </div>
      ))}
    </div>
  </section>
);

const BottomBar = () => (
  <footer className="flex h-[147px] whitespace-nowrap border-t-2 border-[#e7e7e9] leading-none">
    <div className="w-[360px] pl-[57px] pt-[22px]">
      <div className="flex items-center text-[53px] text-[#ea504b]">
        3882.78
        <svg className="ml-[4px]" width="22" height="13" viewBox="0 0 22 13">
          <path d="M1.500 11.500L11 2l9.500 9.500" fill="none" stroke="#333" strokeWidth="2.200" />
        </svg>
      </div>
      <div className="mt-[17px] flex items-center">
        <span className="text-[38.5px] text-[#ea504b]">+0.52%</span>
        <span className="ml-[16px] text-[43px] text-[#333]">上证</span>
      </div>
    </div>
    <button className="w-[195px] bg-[#ff4846] pt-2.5 text-[53px] text-white">闪买</button>
    <button className="w-[195px] bg-[#338afe] pt-2.5 text-[53px] text-white">闪卖</button>
    <button className="flex w-[166px] flex-col items-center border-r-2 border-[#e7e7e9] pt-[18px] text-[41px] text-[#333]">
      <svg width="46" height="48" viewBox="0 0 46 48">
        <rect x="1.500" y="1.500" width="43" height="45" fill="none" stroke="#333" strokeWidth="2.600" />
        <path d="M33.500 14v15H13M20.500 21.500L13 29l7.500 7.500" fill="none" stroke="#333" strokeWidth="3" />
      </svg>
      <span className="mt-[27px]">撤单</span>
    </button>
    <button className="flex flex-1 flex-col items-center pt-[36px] text-[41px] text-[#333]">
      <svg width="48" height="12" viewBox="0 0 48 12" fill="#333">
        <circle cx="6" cy="6" r="4.600" />
        <circle cx="24" cy="6" r="4.600" />
        <circle cx="42" cy="6" r="4.600" />
      </svg>
      <span className="mt-[45px]">更多</span>
    </button>
  </footer>
);

export default function App() {
  return (
    <main className="h-[2388px] w-[1080px] overflow-hidden bg-white font-[Roboto,'Noto_Sans_CJK_SC',sans-serif]">
      <StatusBar />
      <Header />
      <Quote />
      <div className="h-[15px] bg-[#f4f4f4]" />
      <Periods />
      <IndicatorBar />
      <KLineChart />
      <VolumeChart />
      <OrderBook />
      <BottomBar />
    </main>
  );
}
